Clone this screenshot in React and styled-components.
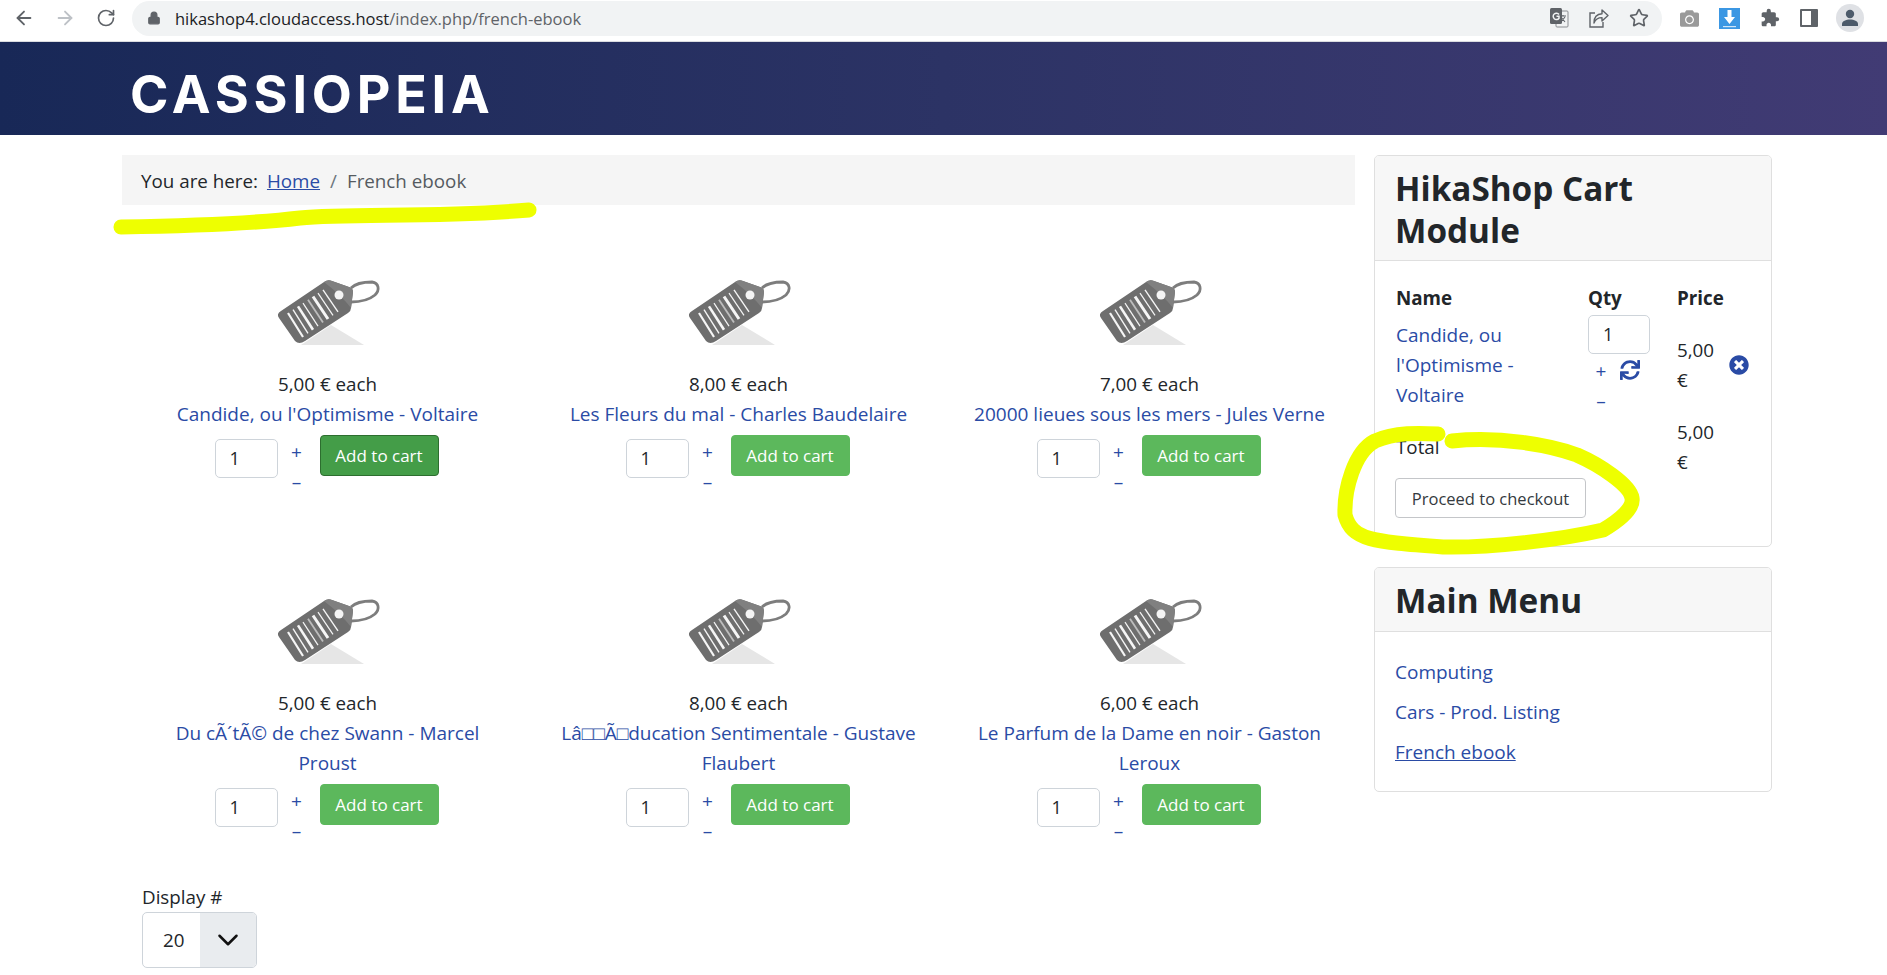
import React from "react";
import styled, { createGlobalStyle } from "styled-components";
import { ArrowLeft, ArrowRight, RotateCw, Lock, Star, ChevronDown } from "lucide-react";
import { FaCamera, FaSync, FaTimesCircle } from "react-icons/fa";
import { MdExtension } from "react-icons/md";

const GlobalStyle = createGlobalStyle`
  html, body {
    margin: 0;
    padding: 0;
    background: #fff;
    overflow: hidden;
  }
  body {
    font-family: "Open Sans", "Noto Sans", sans-serif;
    font-size: 17px;
    color: #22262a;
  }
`;

const products = [
  { price: "5,00 € each", name: "Candide, ou l'Optimisme - Voltaire", hovered: true },
  { price: "8,00 € each", name: "Les Fleurs du mal - Charles Baudelaire" },
  { price: "7,00 € each", name: "20000 lieues sous les mers - Jules Verne" },
  { price: "5,00 € each", name: "Du cÃ´tÃ© de chez Swann - Marcel Proust" },
  { price: "8,00 € each", name: "Lâ□□Ã□ducation Sentimentale - Gustave Flaubert" },
  { price: "6,00 € each", name: "Le Parfum de la Dame en noir - Gaston Leroux" },
];

export default function App() {
  return (
    <Page>
      <GlobalStyle />
      <BrowserBar>
        <NavIcon><ArrowLeft size={22} color="#5f6368" /></NavIcon>
        <NavIcon><ArrowRight size={22} color="#bdc1c6" /></NavIcon>
        <NavIcon><RotateCw size={20} color="#5f6368" /></NavIcon>
        <UrlPill>
          <Lock size={14} color="#5f6368" fill="#5f6368" />
          <UrlText>hikashop4.cloudaccess.host<span>/index.php/french-ebook</span></UrlText>
          <PillIcons>
            <TranslateIcon />
            <ShareIcon />
            <Star size={20} color="#5f6368" strokeWidth={2} />
          </PillIcons>
        </UrlPill>
        <ToolIcons>
          <FaCamera size={19} color="#9a9a9a" />
          <DownloadIcon />
          <MdExtension size={20} color="#5f6368" />
          <SidebarIcon />
          <Avatar><AvatarIcon /></Avatar>
        </ToolIcons>
      </BrowserBar>

      <SiteHeader>
        <Brand>CASSIOPEIA</Brand>
      </SiteHeader>

      <Content>
        <MainColumn>
          <Breadcrumb>
            You are here:<HomeLink>Home</HomeLink><Sep>/</Sep><Current>French ebook</Current>
          </Breadcrumb>
          <ProductGrid>
            {products.map((p) => (
              <Product key={p.name}>
                <TagImage />
                <Price>{p.price}</Price>
                <ProductLink>{p.name}</ProductLink>
                <BuyRow>
                  <QtyInput>1</QtyInput>
                  <Stepper>
                    <span>+</span>
                    <span>–</span>
                  </Stepper>
                  <AddButton $hovered={p.hovered}>Add to cart</AddButton>
                </BuyRow>
              </Product>
            ))}
          </ProductGrid>
          <DisplayLabel>Display #</DisplayLabel>
          <DisplaySelect>
            <span>20</span>
            <SelectArrow><ChevronDown size={34} color="#111" strokeWidth={1.8} /></SelectArrow>
          </DisplaySelect>
        </MainColumn>

        <Sidebar>
          <Card>
            <CardTitle>HikaShop Cart Module</CardTitle>
            <CartBody>
              <CartGrid>
                <HeadCell>Name</HeadCell>
                <HeadCell>Qty</HeadCell>
                <HeadCell>Price</HeadCell>
                <CartName>Candide, ou l'Optimisme - Voltaire</CartName>
                <CartQty>
                  <CartInput>1</CartInput>
                  <CartActions>
                    <Stepper $compact>
                      <span>+</span>
                      <span>–</span>
                    </Stepper>
                    <FaSync size={20} color="#2a4ba5" />
                  </CartActions>
                </CartQty>
                <CartPrice>
                  <PriceText>5,00 €</PriceText>
                  <RemoveIcon><FaTimesCircle size={20} color="#2a4ba5" /></RemoveIcon>
                </CartPrice>
                <TotalLabel>Total</TotalLabel>
                <span />
                <PriceText>5,00 €</PriceText>
              </CartGrid>
              <CheckoutButton>Proceed to checkout</CheckoutButton>
            </CartBody>
          </Card>
          <Card>
            <CardTitle>Main Menu</CardTitle>
            <MenuList>
              <MenuLink>Computing</MenuLink>
              <MenuLink>Cars - Prod. Listing</MenuLink>
              <MenuLink $active>French ebook</MenuLink>
            </MenuList>
          </Card>
        </Sidebar>
      </Content>

      <Highlighter viewBox="0 0 1887 975">
        <path d="M121 227 C 180 226 250 224 300 218 C 350 213 440 218 529 210" />
        <path d="M1438 434 C 1420 433 1395 432 1375 441 C 1354 452 1344 490 1345 515 C 1352 540 1372 542 1443 547 C 1490 548 1560 540 1603 530 C 1620 520 1634 508 1632 498 C 1630 485 1600 465 1577 455 C 1550 445 1500 436 1452 441" />
      </Highlighter>
    </Page>
  );
}

function TranslateIcon() {
  return (
    <svg width="20" height="22" viewBox="0 0 20 22">
      <rect x="7" y="4" width="12" height="16" rx="1" fill="#f1f3f4" stroke="#8a8d91" strokeWidth="1" />
      <path d="M11 9h6M14 8v1M12 15l4-5M12 10l4 5" stroke="#5f6368" strokeWidth="1.1" fill="none" />
      <rect x="1" y="1" width="12" height="16" rx="1.5" fill="#5f6368" />
      <path d="M10 7.5A3.2 3.2 0 1 0 10 11.2V9.2H7.5" stroke="#f1f3f4" strokeWidth="1.5" fill="none" />
    </svg>
  );
}

function ShareIcon() {
  return (
    <svg width="22" height="20" viewBox="0 0 22 20" fill="none" stroke="#5f6368" strokeWidth="1.4">
      <path d="M7 5H2v14h13v-5" />
      <path d="M14 2l6 5.5-6 5.5V9.6C10 9.6 7.5 11 6 15c0-5.5 3-9 8-9.2z" strokeLinejoin="round" />
    </svg>
  );
}

function DownloadIcon() {
  return (
    <svg width="21" height="21" viewBox="0 0 21 21">
      <rect width="21" height="21" fill="#3b97e3" />
      <path d="M8.5 2h4v7h3.5l-5.5 7-5.5-7h3.5z" fill="#fff" />
      <rect x="4" y="18" width="13" height="1.2" fill="#cfe6f8" />
    </svg>
  );
}

function SidebarIcon() {
  return (
    <svg width="18" height="18" viewBox="0 0 18 18">
      <rect width="18" height="18" rx="1" fill="#5f6368" />
      <rect x="2" y="2" width="9" height="14" fill="#fff" />
    </svg>
  );
}

function AvatarIcon() {
  return (
    <svg width="18" height="18" viewBox="0 0 18 18" fill="#4d5b6b">
      <circle cx="9" cy="5" r="4.2" />
      <path d="M1 17v-2c0-3 4-4.500 8-4.500s8 1.500 8 4.500v2z" />
    </svg>
  );
}

const barcode = [2.2, 1.4, 2.6, 1.2, 1.8, 3, 1.2, 1.4];

function TagImage() {
  return (
    <TagSvg viewBox="0 0 130 90">
      <polygon points="70,60 103,80 40,80" fill="#e6e6e6" />
      <path
        d="M90 23 C 95 18 103 17 111 17 C 118 18 119 25 114 30 C 108 35 99 37 90 37"
        fill="none"
        stroke="#7d7d7d"
        strokeWidth="2.8"
      />
      <path
        d="M20 46 L63 17 Q67 14 71 16 L88 22 Q92 23 92 27 L90 43 Q90 46 87 48 L44 76 Q38 80 34 76 L18 53 Q15 49 20 46Z"
        fill="#6e6e6e"
      />
      <path d="M63 17 Q67 14 71 16 L88 22 Q92 23 92 27 L90 43 Q80 30 63 17Z" fill="#808080" />
      <circle cx="78" cy="30" r="4.500" fill="#f4f4f4" />
      <g fill="none">
        {barcode.map((w, i) => (
          <line
            key={i}
            x1={27 + i * 5}
            y1={48 - i * 3.3}
            x2={42 + i * 5}
            y2={72 - i * 3.6}
            stroke={i === 4 ? "#bdbdbd" : "#f6f6f6"}
            strokeWidth={w}
          />
        ))}
      </g>
    </TagSvg>
  );
}

const Page = styled.div`
  position: relative;
  width: 1887px;
  height: 975px;
  overflow: hidden;
`;

const BrowserBar = styled.div`
  height: 42px;
  box-sizing: border-box;
  border-bottom: 1px solid #dadce0;
  display: flex;
  align-items: center;
  padding: 0 16px 5px 3px;
  background: #fff;
`;

const NavIcon = styled.div`
  width: 41px;
  display: flex;
  justify-content: center;
`;

const UrlPill = styled.div`
  width: 1530px;
  height: 35px;
  margin-left: 6px;
  box-sizing: border-box;
  padding: 0 13px 0 15px;
  background: #f1f3f4;
  border-radius: 18px;
  display: flex;
  align-items: center;
`;

const UrlText = styled.div`
  margin-left: 14px;
  font-size: 16.5px;
  color: #202124;

  span {
    color: #5f6368;
  }
`;

const PillIcons = styled.div`
  margin-left: auto;
  display: flex;
  align-items: center;
  gap: 19px;
`;

const ToolIcons = styled.div`
  margin-left: 18px;
  display: flex;
  align-items: center;
  gap: 20px;
`;

const Avatar = styled.div`
  width: 28px;
  height: 28px;
  margin-left: -2px;
  border-radius: 50%;
  background: #dfe1e5;
  display: flex;
  align-items: center;
  justify-content: center;
`;

const SiteHeader = styled.header`
  height: 93px;
  box-sizing: border-box;
  padding: 27px 0 0 130px;
  background: linear-gradient(90deg, #182857 0%, #2c3365 50%, #413b74 100%);
`;

const Brand = styled.div`
  font-family: "Inter", sans-serif;
  font-size: 52px;
  line-height: 52px;
  font-weight: 700;
  letter-spacing: 4.8px;
  color: #fff;
`;

const Content = styled.div`
  display: flex;
  gap: 19px;
  padding: 20px 0 0 122px;
`;

const MainColumn = styled.main`
  width: 1233px;
`;

const Breadcrumb = styled.div`
  height: 50px;
  box-sizing: border-box;
  padding: 2px 0 0 19px;
  background: #f5f5f5;
  display: flex;
  align-items: center;
  font-size: 18.8px;
`;

const HomeLink = styled.a`
  margin-left: 9px;
  color: #2a4ba5;
  text-decoration: underline;
`;

const Sep = styled.span`
  margin: 0 10px;
  color: #6c757d;
`;

const Current = styled.span`
  color: #555b61;
`;

const ProductGrid = styled.div`
  display: grid;
  grid-template-columns: repeat(3, 411px);
  row-gap: 100px;
  padding-top: 73px;
`;

const Product = styled.div`
  display: flex;
  flex-direction: column;
  align-items: center;
  text-align: center;
`;

const TagSvg = styled.svg`
  width: 130px;
  height: 90px;
  margin: -13px 0 14px -4px;
`;

const Price = styled.div`
  line-height: 30px;
  font-size: 18.8px;
`;

const ProductLink = styled.a`
  width: 360px;
  line-height: 30px;
  font-size: 19px;
  color: #2a4ba5;
`;

const BuyRow = styled.div`
  display: flex;
  align-items: flex-start;
  margin: 6px 0 0 -2px;
`;

const QtyInput = styled.div`
  width: 63px;
  height: 39px;
  margin-top: 4px;
  box-sizing: border-box;
  padding-left: 14px;
  border: 1px solid #ced4da;
  border-radius: 5px;
  background: #fff;
  font-size: 18px;
  line-height: 37px;
  text-align: left;
`;

const Stepper = styled.div`
  width: ${(p) => (p.$compact ? "26px" : "42px")};
  box-sizing: border-box;
  padding-right: ${(p) => (p.$compact ? "0" : "4px")};
  display: flex;
  flex-direction: column;
  align-items: center;
  margin-top: 2px;
  color: #2a4ba5;
  line-height: 30px;
  font-size: 19px;
  text-align: center;
`;

const AddButton = styled.button`
  width: 119px;
  height: 41px;
  padding: 0;
  box-sizing: border-box;
  border: 1px solid ${(p) => (p.$hovered ? "#2d6e2f" : "#5cb85c")};
  border-radius: 4px;
  background: ${(p) => (p.$hovered ? "#449d48" : "#5cb85c")};
  color: #fff;
  font-family: inherit;
  font-size: 17px;
`;

const DisplayLabel = styled.div`
  margin: 36px 0 0 20px;
  line-height: 30px;
  font-size: 18.8px;
`;

const DisplaySelect = styled.div`
  width: 115px;
  height: 56px;
  margin-left: 20px;
  box-sizing: border-box;
  border: 1px solid #ced4da;
  border-radius: 5px;
  overflow: hidden;
  display: flex;
  align-items: center;
  font-size: 18.8px;

  > span {
    width: 57px;
    padding-left: 20px;
    box-sizing: border-box;
  }
`;

const SelectArrow = styled.div`
  flex: 1;
  align-self: stretch;
  background: #e9ecef;
  display: flex;
  align-items: center;
  justify-content: center;
`;

const Sidebar = styled.aside`
  width: 398px;
  display: flex;
  flex-direction: column;
  gap: 20px;
`;

const Card = styled.section`
  border: 1px solid #dfdfdf;
  border-radius: 5px;
  overflow: hidden;
`;

const CardTitle = styled.h3`
  margin: 0;
  padding: 12px 21px 9px 20px;
  background: #f7f7f7;
  border-bottom: 1px solid #dfdfdf;
  font-size: 33.3px;
  line-height: 41.500px;
  font-weight: 700;
`;

const CartBody = styled.div`
  padding: 22px 22px 28px 21px;
`;

const CartGrid = styled.div`
  display: grid;
  grid-template-columns: 192px 89px 1fr;
  align-items: start;
`;

const HeadCell = styled.div`
  font-weight: 700;
  line-height: 30px;
  font-size: 18.8px;
`;

const CartName = styled.a`
  margin-top: 7px;
  width: 145px;
  line-height: 30px;
  font-size: 19px;
  color: #2a4ba5;
`;

const CartQty = styled.div`
  height: 104px;
`;

const CartInput = styled(QtyInput)`
  width: 62px;
  margin: 2px 0 0;
`;

const CartActions = styled.div`
  display: flex;
  align-items: flex-start;
  gap: 6px;
  margin-top: 0;

  svg {
    margin-top: 6px;
  }
`;

const CartPrice = styled.div`
  display: flex;
  align-items: center;
  margin-top: 22px;
`;

const PriceText = styled.div`
  width: 45px;
  line-height: 30px;
  font-size: 18.8px;
`;

const RemoveIcon = styled.div`
  margin-left: 7px;
  display: flex;
`;

const TotalLabel = styled.div`
  margin-top: 15px;
  line-height: 30px;
  font-size: 18.8px;
`;

const CheckoutButton = styled.button`
  display: block;
  width: 191px;
  height: 40px;
  margin: 1px 0 0 -1px;
  padding: 0;
  border: 1px solid #c4c6c9;
  border-radius: 4px;
  background: #fff;
  color: #343a40;
  font-family: inherit;
  font-size: 16.5px;
`;

const MenuList = styled.nav`
  padding: 25px 21px 24px 20px;
  display: flex;
  flex-direction: column;
  gap: 10px;
`;

const MenuLink = styled.a`
  line-height: 30px;
  font-size: 19px;
  color: #2a4ba5;
  text-decoration: ${(p) => (p.$active ? "underline" : "none")};
`;

const Highlighter = styled.svg`
  position: absolute;
  top: 0;
  left: 0;
  width: 1887px;
  height: 975px;
  pointer-events: none;

  path {
    fill: none;
    stroke: #eeff00;
    stroke-width: 15;
    stroke-linecap: round;
    stroke-linejoin: round;
  }
`;
